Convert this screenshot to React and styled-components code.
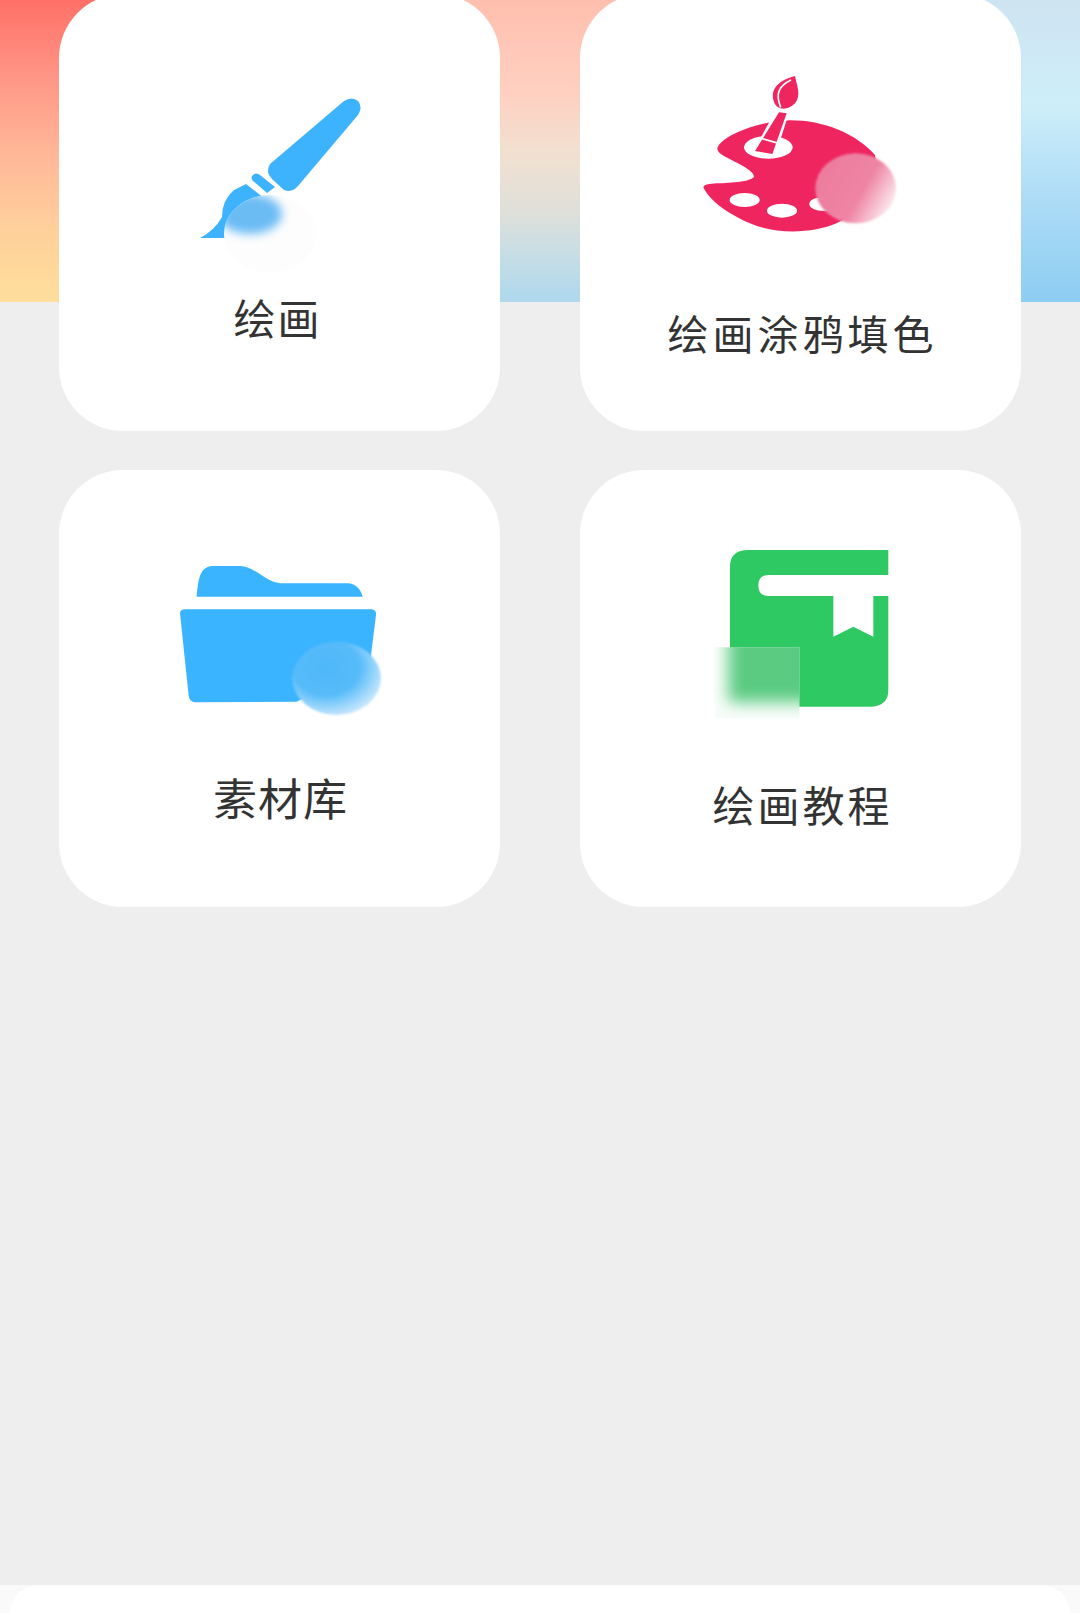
import React from 'react'
import styled, { createGlobalStyle } from 'styled-components';

const GlobalStyle = createGlobalStyle`
  html, body {
    margin: 0;
    padding: 0;
    background: #eeeeee;
  }
`;

const Page = styled.div`
  width: 1080px;
  height: 1613px;
  overflow: hidden;
  display: flex;
  flex-direction: column;
  background: #eeeeee;
  font-family: "Noto Sans CJK SC", "Noto Sans", sans-serif;
`;

// only three strips of the banner show between the cards
const Hero = styled.div`
  flex: none;
  height: 302px;
  background:
    linear-gradient(180deg, #ff7068 0%, #ff9585 25%, #ffb999 52%, #ffcf9b 75%, #fede9c 100%) 0 0 / 200px 100% no-repeat,
    linear-gradient(180deg, #ffbfae 0%, #ffcfc0 30%, #f2e0d0 50%, #dfe0da 70%, #c5dde5 85%, #aed8ed 100%) 400px 0 / 300px 100% no-repeat,
    linear-gradient(180deg, #cfe4f1 0%, #cdeef9 35%, #aedcf6 65%, #8ccdf2 100%) 900px 0 / 180px 100% no-repeat,
    #ffffff;
`;

const Grid = styled.div`
  flex: none;
  display: grid;
  grid-template-columns: 441px 441px;
  column-gap: 80px;
  row-gap: 39px;
  margin: -308px 0 0 59px;
`;

const Card = styled.div`
  height: 437px;
  border-radius: 64px;
  background: #ffffff;
  display: flex;
  flex-direction: column;
  align-items: center;
`;

const IconWrap = styled.div`
  flex: none;
  display: flex;
  margin-top: ${p => p.$top}px;
  margin-left: ${p => p.$left || 0}px;
`;

const Label = styled.div`
  flex: none;
  margin-top: ${p => p.$top}px;
  margin-left: ${p => p.$left || 0}px;
  font-size: ${p => p.$size || 42}px;
  line-height: 48px;
  letter-spacing: ${p => p.$spacing || 0}px;
  color: #333333;
  white-space: nowrap;
`;

const Spacer = styled.div`
  flex: 1;
`;

const BottomBar = styled.div`
  flex: none;
  height: 28px;
  background: #fafafa;
`;

const BottomSheet = styled.div`
  height: 100%;
  margin: 0 10px;
  background: #ffffff;
  border-radius: 56px 56px 0 0;
`;

function BrushIcon() {
  return (
    <svg width="170" height="180" viewBox="195 95 170 180">
      <defs>
        <filter id="brushBlur" x="-40%" y="-40%" width="180%" height="180%"><feGaussianBlur stdDeviation="5" /></filter>
        <clipPath id="brushGlass"><ellipse cx="270" cy="234" rx="46" ry="39" /></clipPath>
      </defs>
      <path d="M270 164 L344 101 Q352 96 358 101 Q363 107 358 115 L298 186 Q292 193 284 190 L272 179 Q265 172 270 164 Z" fill="#3db3fd" />
      <path d="M253 181 Q250 177 253 175 Q256 172 260 175 L275 187 L267 193 Z" fill="#3db3fd" />
      <path d="M246 184 L264 198 L262 238 L200 238 Q214 231 222 217 Q222 200 234 190 Z" fill="#3db3fd" />
      <ellipse cx="270" cy="234" rx="46" ry="39" fill="#fdfdfd" />
      <g clipPath="url(#brushGlass)">
        <ellipse cx="250" cy="214" rx="32" ry="20" fill="#6cbcf4" filter="url(#brushBlur)" />
      </g>
    </svg>
  );
}

function PaletteIcon() {
  return (
    <svg width="220" height="190" viewBox="0 0 660 570">
      <defs>
        <linearGradient id="paletteGlass" x1="0" y1="0.2" x2="1" y2="0.7">
          <stop offset="0" stopColor="#ec7b9d" />
          <stop offset="0.6" stopColor="#ee84a4" />
          <stop offset="1" stopColor="#fdf0f4" />
        </linearGradient>
        <filter id="paletteBlur" x="-10%" y="-10%" width="120%" height="120%"><feGaussianBlur stdDeviation="3" /></filter>
      </defs>
      <path d="M113 262 C125 235 190 200 290 183 C400 170 520 210 585 285 L600 420 L470 490 C400 520 290 525 210 490 C150 465 90 425 70 382 C72 372 90 372 110 370 C160 368 210 365 222 350 C222 335 190 318 150 298 C125 285 108 275 113 262 Z" fill="#ef2560" />
      <ellipse cx="265" cy="262" rx="73" ry="34" fill="#ffffff" />
      <path d="M288 150 L328 155 L284 292 L216 280 Z" fill="#ffffff" />
      <path d="M297 157 L320 160 L277 282 L225 273 Z" fill="#ef2560" />
      <path d="M246 236 L296 250" stroke="#ffffff" strokeWidth="5" />
      <path d="M345 48 C300 60 268 85 282 125 C290 152 325 152 345 130 C365 105 350 75 345 48 Z" fill="#ef2560" />
      <path d="M333 60 C300 76 284 98 302 142" stroke="#ffffff" strokeWidth="5" fill="none" />
      <ellipse cx="194" cy="420" rx="45" ry="21" fill="#ffffff" />
      <ellipse cx="306" cy="452" rx="45" ry="21" fill="#ffffff" />
      <ellipse cx="430" cy="432" rx="42" ry="21" fill="#ffffff" />
      <ellipse cx="527" cy="385" rx="121" ry="105" fill="url(#paletteGlass)" filter="url(#paletteBlur)" />
    </svg>
  );
}

function FolderIcon() {
  return (
    <svg width="210" height="160" viewBox="105 90 630 480">
      <defs>
        <radialGradient id="folderGlass" cx="0.38" cy="0.35" r="0.75">
          <stop offset="0" stopColor="#4fb8f9" />
          <stop offset="0.5" stopColor="#56bbf9" />
          <stop offset="1" stopColor="#e2f2fc" />
        </radialGradient>
        <filter id="folderBlur" x="-10%" y="-10%" width="120%" height="120%"><feGaussianBlur stdDeviation="3" /></filter>
      </defs>
      <path d="M170 200 C175 150 178 112 215 108 L300 108 C345 110 375 155 420 160 L625 160 C650 162 662 180 668 200 Z" fill="#3bb4ff" />
      <path d="M120 250 Q120 238 135 238 L695 238 Q710 240 708 255 L690 400 L470 515 L165 517 Q148 515 146 497 Z" fill="#3bb4ff" />
      <ellipse cx="590" cy="445" rx="133" ry="110" fill="url(#folderGlass)" filter="url(#folderBlur)" />
    </svg>
  );
}

function BookIcon() {
  return (
    <svg width="180" height="175" viewBox="90 45 540 525">
      <defs>
        <filter id="bookBlur" x="-40%" y="-40%" width="180%" height="180%"><feGaussianBlur stdDeviation="24" /></filter>
        <clipPath id="bookGlass"><rect x="103" y="352" width="255" height="213" /></clipPath>
      </defs>
      <path d="M150 110 Q150 60 205 60 L625 60 L625 135 L265 135 Q235 135 235 166 Q235 198 265 198 L460 198 L460 320 L520 290 L580 320 L580 198 L625 198 L625 480 Q625 530 570 530 L150 530 Z" fill="#2fc963" />
      <rect x="103" y="352" width="255" height="213" fill="#f9fdfa" />
      <g clipPath="url(#bookGlass)">
        <rect x="145" y="305" width="290" height="212" fill="#5acb81" filter="url(#bookBlur)" />
      </g>
    </svg>
  );
}

function App() {
  return (
    <Page>
      <GlobalStyle />
      <Hero />
      <Grid>
        <Card>
          <IconWrap $top={101}><BrushIcon /></IconWrap>
          <Label $top={18} $left={-4} $spacing={2}>绘画</Label>
        </Card>
        <Card>
          <IconWrap $top={66} $left={-21}><PaletteIcon /></IconWrap>
          <Label $top={58} $left={4} $size={41} $spacing={4}>绘画涂鸦填色</Label>
        </Card>
        <Card>
          <IconWrap $top={90}><FolderIcon /></IconWrap>
          <Label $top={53} $left={2} $size={44} $spacing={1}>素材库</Label>
        </Card>
        <Card>
          <IconWrap $top={75} $left={-2}><BookIcon /></IconWrap>
          <Label $top={60} $left={4} $spacing={3}>绘画教程</Label>
        </Card>
      </Grid>
      <Spacer />
      <BottomBar>
        <BottomSheet />
      </BottomBar>
    </Page>
  );
}

export default App;
